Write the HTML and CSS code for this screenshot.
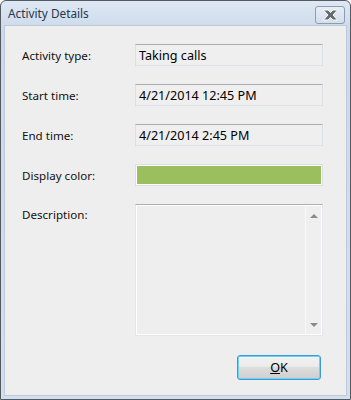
FILE: index.html
```html
<!DOCTYPE html>
<html lang="en">
<head>
    <meta charset="UTF-8">
    <title>Activity Details</title>
    <link rel="stylesheet" href="styles.css">
</head>
<body>
    <div class="window">
        <div class="titlebar">
            <span class="title">Activity Details</span>
            <button class="close-btn" aria-label="Close">
                <svg class="close-icon" width="17" height="12" viewBox="0 0 17 12">
                    <path d="M1.5 1 L6 1 L8.5 3.6 L11 1 L15.5 1 L11 6 L15.5 11 L11 11 L8.5 8.4 L6 11 L1.5 11 L6 6 Z" fill="#65686c" stroke="#fdfdfd" stroke-width="1" stroke-linejoin="round"/>
                </svg>
            </button>
        </div>
        <div class="client">
            <div class="form">
                <div class="label">Activity type:</div>
                <div class="field">Taking calls</div>

                <div class="label">Start time:</div>
                <div class="field">4/21/2014 12:45 PM</div>

                <div class="label">End time:</div>
                <div class="field">4/21/2014 2:45 PM</div>

                <div class="label">Display color:</div>
                <div class="field color-field"><div class="swatch"></div></div>

                <div class="label label-top">Description:</div>
                <div class="memo">
                    <div class="memo-text"></div>
                    <div class="scrollbar">
                        <span class="arrow arrow-up"></span>
                        <span class="arrow arrow-down"></span>
                    </div>
                </div>
            </div>
            <div class="buttons">
                <button class="ok-btn"><u>O</u>K</button>
            </div>
        </div>
    </div>
</body>
</html>
```

FILE: styles.css
```css
body {
    margin: 0;
    font-family: "Noto Sans", "Open Sans", sans-serif;
    font-size: 11.6px;
    background: #ffffff;
}
.window {
    width: 351px;
    height: 400px;
    box-sizing: border-box;
    border: 1px solid #535a62;
    border-radius: 6px 6px 0 0;
    background: linear-gradient(#dfe8f4, #cbd9ea 30px, #d3dfed);
    padding: 0 3px 3px 3px;
    display: flex;
    flex-direction: column;
}
.titlebar {
    height: 24px;
    display: flex;
    align-items: center;
    justify-content: space-between;
    padding-left: 4px;
}
.title {
    color: #27384b;
    font-size: 11.8px;
}
.close-btn {
    width: 30px;
    height: 18px;
    margin-top: 4px;
    margin-right: 2px;
    padding: 0;
    border: 1px solid #8c9cb1;
    border-radius: 3px;
    background: linear-gradient(#e6edf6, #d3deec);
    display: flex;
    align-items: center;
    justify-content: center;
}
.close-icon {
    display: block;
}
.client {
    flex: 1;
    background: #eeeeee;
    border: 1px solid #bccadb;
    display: flex;
    flex-direction: column;
}
.form {
    display: grid;
    grid-template-columns: 113px 188px;
    grid-template-rows: 22px 22px 22px 22px 132px;
    row-gap: 18px;
    padding: 18px 0 0 17px;
}
.label {
    color: #111111;
    display: flex;
    align-items: center;
}
.label-top {
    align-items: flex-start;
    padding-top: 3px;
}
.field {
    box-sizing: border-box;
    border: 1px solid #dbdfe6;
    border-top-color: #abadb3;
    background: #efefef;
    padding: 0 3px;
    font-size: 12.6px;
    color: #000000;
    display: flex;
    align-items: center;
}
.color-field {
    padding: 1px;
    border-color: #dbdfe6;
    background: #ffffff;
}
.swatch {
    width: 100%;
    height: 100%;
    background: #9bbf5e;
}
.memo {
    box-sizing: border-box;
    border: 1px solid #e3e7ec;
    border-top-color: #abadb3;
    background: #eeeeee;
    display: flex;
}
.memo-text {
    flex: 1;
    border: 1px solid #ffffff;
    border-right: none;
}
.scrollbar {
    width: 15px;
    border-left: 1px solid #f7f7f7;
    border-right: 1px solid #ffffff;
    border-bottom: 1px solid #ffffff;
    border-top: 1px solid #ffffff;
    background: #efefef;
    display: flex;
    flex-direction: column;
    justify-content: space-between;
    align-items: center;
    padding: 8px 0 7px 0;
}
.arrow {
    width: 0;
    height: 0;
    border-left: 4px solid transparent;
    border-right: 4px solid transparent;
}
.arrow-up {
    border-bottom: 4px solid #8a8a8a;
}
.arrow-down {
    border-top: 4px solid #8a8a8a;
}
.buttons {
    display: flex;
    justify-content: flex-end;
    padding: 19px 25px 0 0;
}
.ok-btn {
    width: 84px;
    height: 25px;
    font-family: "Noto Sans", "Open Sans", sans-serif;
    font-size: 12.6px;
    color: #000000;
    border: 1px solid #3c9bd6;
    border-radius: 3px;
    box-shadow: inset 0 0 0 1px #6ed1f5;
    background: linear-gradient(#f2f2f2 0%, #ebebeb 45%, #dddddd 50%, #cfcfcf 100%);
    padding: 0;
}
```
